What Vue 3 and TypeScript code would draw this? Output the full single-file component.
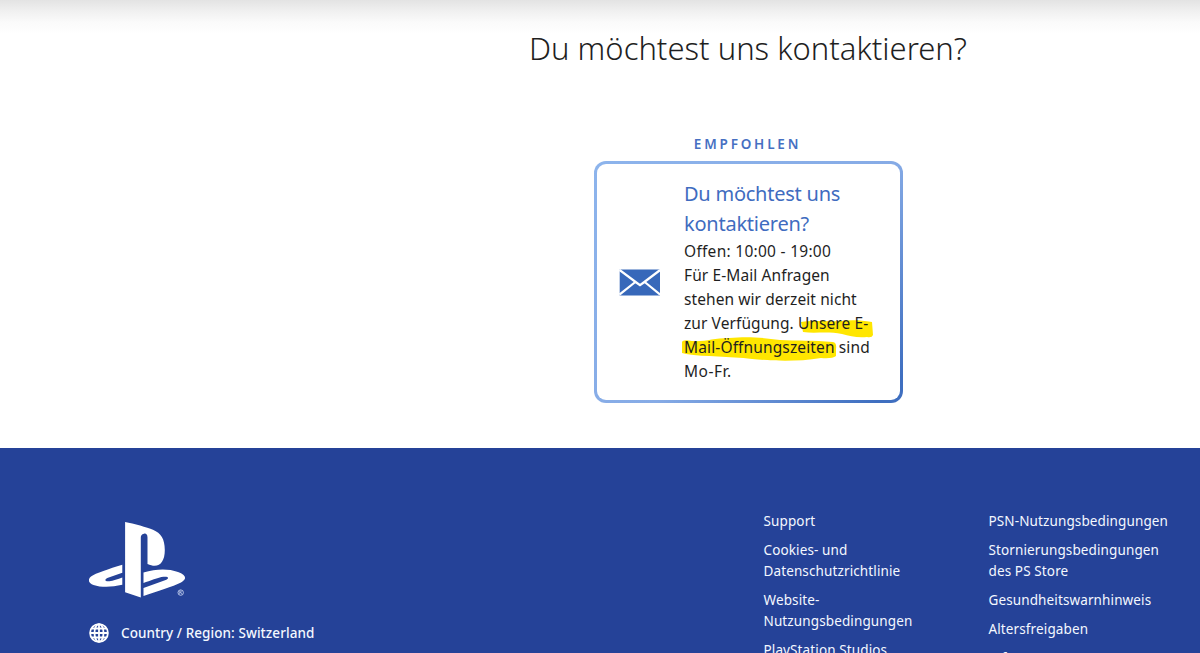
<script setup lang="ts">
interface FooterLink {
  id: string
  lines: string[]
}

const legal: FooterLink[] = [
  { id: 'support', lines: ['Support'] },
  { id: 'privacy', lines: ['Cookies- und', 'Datenschutzrichtlinie'] },
  { id: 'website', lines: ['Website-', 'Nutzungsbedingungen'] },
  { id: 'studios', lines: ['PlayStation Studios'] },
]

const policies: FooterLink[] = [
  { id: 'psn', lines: ['PSN-Nutzungsbedingungen'] },
  { id: 'refunds', lines: ['Stornierungsbedingungen', 'des PS Store'] },
  { id: 'health', lines: ['Gesundheitswarnhinweis'] },
  { id: 'ratings', lines: ['Altersfreigaben'] },
  { id: 'info', lines: ['Info'] },
]
</script>

<template>
  <div class="page">
    <main class="contact">
      <h1 class="title">Du möchtest uns kontaktieren?</h1>
      <section class="option">
        <p class="badge">Empfohlen</p>
        <a class="card">
          <svg class="mail" viewBox="0 0 42 27">
            <rect x="0.7" y="0.5" width="40.3" height="26" fill="#3768ba" />
            <path d="M0.5 1 L18 14 L21 16.2 L24 14 L41.2 1 M0.5 25.600 L16.300 13 M25.700 13 L41.200 25.600" fill="none" stroke="#fff" stroke-width="2.200" />
          </svg>
          <div class="copy">
            <h2 class="heading">Du möchtest uns<br />kontaktieren?</h2>
            <p class="text">
              <svg class="marker" viewBox="0 0 194 44">
                <path d="M119 4 C130 2 145 4 158 3 C169 2 178 2 190 4 L191 17 Q190 20 185 19 C175 20 168 18 160 16 C145 13 133 16 121 14 Z" />
                <path d="M0 24 Q1 21 10 23 C24 24 31 20 47 20 C68 18 82 20 98 22 C115 23 131 22 151 24 Q155 25 154 31 L154 38 Q150 41 139 40 C115 44 90 43 70 41 C47 38 24 39 4 36 L0 35 Z" />
              </svg>
              <span class="l1">Offen: 10:00 - 19:00</span>
              <span class="l2">Für E-Mail Anfragen</span>
              <span class="l3">stehen wir derzeit nicht</span>
              <span class="l4">zur Verfügung. Unsere E-</span>
              <span class="l5">Mail-Öffnungszeiten sind</span>
              <span class="l6">Mo-Fr.</span>
            </p>
          </div>
        </a>
      </section>
    </main>

    <footer class="footer">
      <div class="brand">
        <svg class="logo" viewBox="0 0 98 76">
          <g fill="#fff">
            <path d="M36.1 0 C45 1.700 58 5.200 64 7.800 C72 11.200 75.800 17 75.800 28 C75.800 41 69.500 47 58.500 42 V15.500 C58.500 12 56.500 11.200 55 11.800 C52.500 12.300 51.800 13.800 51.800 15.500 V75.400 L36.100 70.300 Z" />
            <path d="M33.300 42.800 V50.700 L19 55.700 C15 57.300 15.500 59.800 20.500 59.300 C24 59 29 57 33.300 55.600 V62.800 C22 65.400 12 65.400 4.500 62.900 C-1 60.900 -1.300 57.200 2 54.600 C6.500 51.200 20 46.900 33.300 42.800 Z" />
            <path d="M54.500 50.600 C67 46.600 79 46.400 89 49.900 C97 52.700 98.500 56.900 92 60.400 C84 64.600 68 69 54.500 74 V66 L76 58.300 C81 56.400 79.500 54.300 74.500 54.800 C69 55.400 61 58.900 54.500 60.900 Z" />
          </g>
          <circle cx="91.700" cy="70.600" r="2.700" fill="none" stroke="#d6e0f8" stroke-width="0.8" />
          <path d="M90.700 72.200 V69.100 H92 Q93.100 69.800 92 70.600 H90.700 M91.900 70.600 L92.900 72.200" fill="none" stroke="#d6e0f8" stroke-width="0.6" />
        </svg>
        <a class="region">
          <svg class="globe" viewBox="0 0 20 20">
            <g fill="none" stroke="#fff" stroke-width="1.800">
              <circle cx="10" cy="10" r="8.900" />
              <ellipse cx="10" cy="10" rx="4.500" ry="8.900" />
              <path d="M10 1 V19 M1 10 H19 M2.800 5.500 H17.200 M2.800 14.500 H17.200" />
            </g>
          </svg>
          <span>Country / Region: Switzerland</span>
        </a>
      </div>
      <ul class="links">
        <li v-for="link in legal" :key="link.id">
          <span v-for="line in link.lines" :key="line">{{ line }}</span>
        </li>
      </ul>
      <ul class="links">
        <li v-for="link in policies" :key="link.id">
          <span v-for="line in link.lines" :key="line">{{ line }}</span>
        </li>
      </ul>
    </footer>
  </div>
</template>

<style>
body {
  margin: 0;
  overflow: hidden;
}
</style>

<style scoped>
.page {
  display: flex;
  flex-direction: column;
  width: 1200px;
  height: 653px;
  overflow: hidden;
  background: #fff;
  font-family: 'Noto Sans', 'Open Sans', sans-serif;
  color: #1f1f1f;
}
h1, h2, p, ul {
  margin: 0;
  padding: 0;
  font-weight: 400;
}
.contact {
  box-sizing: border-box;
  height: 448px;
  flex: none;
  padding: 26px 0 0 296px;
  display: flex;
  flex-direction: column;
  align-items: center;
  background: linear-gradient(#e3e3e3, #f1f1f1 12px, #fafafa 22px, #fff 34px);
}
.title {
  font-size: 31px;
  line-height: 44px;
  font-weight: 300;
  white-space: nowrap;
}
.option {
  margin-top: 64px;
  width: 309px;
}
.badge {
  box-sizing: border-box;
  padding-right: 1px;
  font-size: 13.5px;
  line-height: 21px;
  height: 20px;
  font-weight: 600;
  letter-spacing: 2.8px;
  text-transform: uppercase;
  text-align: center;
  color: #4670c2;
}
.card {
  box-sizing: border-box;
  margin-top: 7px;
  width: 309px;
  height: 242px;
  display: flex;
  align-items: center;
  border: 3px solid transparent;
  border-radius: 12px;
  background:
    linear-gradient(#fff, #fff) padding-box,
    linear-gradient(135deg, #8db4ec, #86abe6 55%, #3f6fc0 95%) border-box;
}
.mail {
  width: 42px;
  height: 27px;
  margin-left: 22px;
}
.copy {
  margin-left: 23.5px;
  padding-bottom: 2px;
  white-space: nowrap;
}
.heading {
  font-size: 20px;
  line-height: 30px;
  letter-spacing: -0.24px;
  color: #3f6cc0;
}
.text {
  position: relative;
  isolation: isolate;
  font-size: 15.5px;
  line-height: 24px;
}
.text span {
  display: block;
}
.l1 { letter-spacing: 0.28px; }
.l2 { letter-spacing: 0.1px; }
.l3 { letter-spacing: 0.08px; }
.l4 { letter-spacing: 0.08px; }
.l5 { letter-spacing: 0.13px; }
.l6 { letter-spacing: 0.5px; }
.marker {
  position: absolute;
  z-index: -1;
  left: -2px;
  top: 79px;
  width: 194px;
  height: 44px;
  fill: #ffe600;
}
.footer {
  flex: 1;
  display: grid;
  grid-template-columns: 674.5px 225px 211px;
  padding: 63px 0 0 89px;
  background: #254298;
  color: #f4f8ff;
  font-size: 13.5px;
  font-weight: 500;
  overflow: hidden;
}
.logo {
  display: block;
  width: 98px;
  height: 76px;
  margin-top: 11px;
}
.region {
  display: flex;
  align-items: center;
  gap: 12px;
  margin-top: 25px;
  line-height: 20px;
  letter-spacing: 0.07px;
}
.globe {
  width: 20px;
  height: 20px;
}
.links {
  list-style: none;
  line-height: 21px;
  letter-spacing: 0.12px;
  white-space: nowrap;
}
.links li {
  margin-bottom: 8px;
}
.links span {
  display: block;
}
</style>
